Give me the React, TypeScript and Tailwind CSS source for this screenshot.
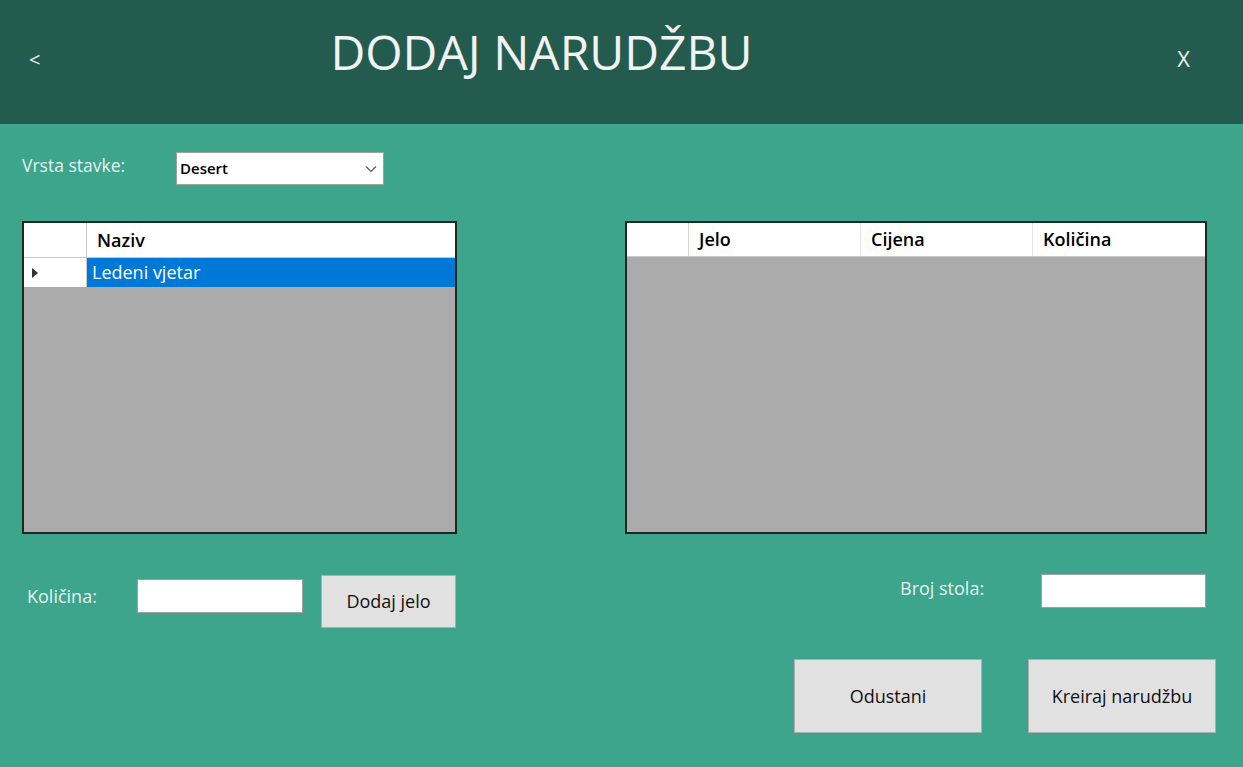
export default function App() {
  return (
    <div className="w-[1243px] h-[767px] overflow-hidden bg-[#3da58c] font-['Open_Sans',sans-serif]">
      <header className="h-[124px] bg-[#235c4f] flex items-start text-[#f2f2f2]">
        <span className="ml-[29px] mt-[48px] text-[20px] leading-[24px]">&lt;</span>
        <h1 className="ml-[290px] mt-[22px] text-[48px] leading-[60px]">DODAJ NARUDŽBU</h1>
        <span className="ml-auto mr-[53px] mt-[44px] text-[22px] leading-[28px]">X</span>
      </header>

      <div className="flex items-center mt-[28px] ml-[22px]">
        <span className="w-[154px] -mt-[6px] text-[17.5px] text-[#e3f2ee]">Vrsta stavke:</span>
        <div className="w-[208px] h-[33px] bg-white border border-[#a0a0a0] flex items-center justify-between pl-[3px] pr-[6px]">
          <span className="text-[15px] font-semibold text-black">Desert</span>
          <svg width="12" height="8" viewBox="0 0 12 8">
            <path d="M1 1.5 L6 6.5 L11 1.5" fill="none" stroke="#555" strokeWidth="1.2" />
          </svg>
        </div>
      </div>

      <div className="flex mt-[36px] ml-[22px] gap-[168px]">
        <div className="w-[435px] h-[313px] border-2 border-[#1e2624] bg-[#ababab] flex flex-col">
          <div className="h-[35px] bg-white flex border-b border-[#c8c8c8]">
            <div className="w-[63px] border-r border-[#c8c8c8]" />
            <div className="pl-[10px] flex items-center text-[18px] font-semibold text-black">Naziv</div>
          </div>
          <div className="h-[29px] flex">
            <div className="w-[63px] bg-white border-r border-[#c8c8c8] flex items-center pl-[8px]">
              <svg width="6" height="10" viewBox="0 0 6 10">
                <path d="M0 0 L6 5 L0 10 Z" fill="#333" />
              </svg>
            </div>
            <div className="flex-1 bg-[#0078d7] flex items-center pl-[5px] text-[18px] text-white">
              Ledeni vjetar
            </div>
          </div>
        </div>

        <div className="w-[582px] h-[313px] border-2 border-[#1e2624] bg-[#ababab] flex flex-col">
          <div className="h-[34px] bg-white flex border-b border-[#c8c8c8] text-[18px] font-semibold text-black">
            <div className="w-[62px] border-r border-[#d4d4d4]" />
            <div className="w-[172px] border-r border-[#e4e4e4] flex items-center pl-[10px]">Jelo</div>
            <div className="w-[172px] border-r border-[#e4e4e4] flex items-center pl-[10px]">Cijena</div>
            <div className="flex-1 flex items-center pl-[10px]">Količina</div>
          </div>
        </div>
      </div>

      <div className="flex items-start mt-[41px] ml-[27px] pr-[37px]">
        <span className="mt-[8px] w-[110px] text-[18px] text-[#e3f2ee]">Količina:</span>
        <div className="mt-[4px] w-[166px] h-[34px] bg-white border border-[#a0a0a0]" />
        <button className="ml-[18px] w-[135px] h-[53px] bg-[#e1e1e1] border border-[#adadad] text-[18px] text-[#111]">
          Dodaj jelo
        </button>
        <span className="ml-auto mt-0 w-[141px] text-[18px] text-[#e3f2ee]">Broj stola:</span>
        <div className="-mt-[1px] w-[165px] h-[34px] bg-white border border-[#a0a0a0]" />
      </div>

      <div className="flex justify-end gap-[46px] mt-[31px] pr-[27px]">
        <button className="w-[188px] h-[74px] bg-[#e1e1e1] border border-[#adadad] text-[18px] text-[#111]">
          Odustani
        </button>
        <button className="w-[188px] h-[74px] bg-[#e1e1e1] border border-[#adadad] text-[18px] text-[#111]">
          Kreiraj narudžbu
        </button>
      </div>
    </div>
  );
}
